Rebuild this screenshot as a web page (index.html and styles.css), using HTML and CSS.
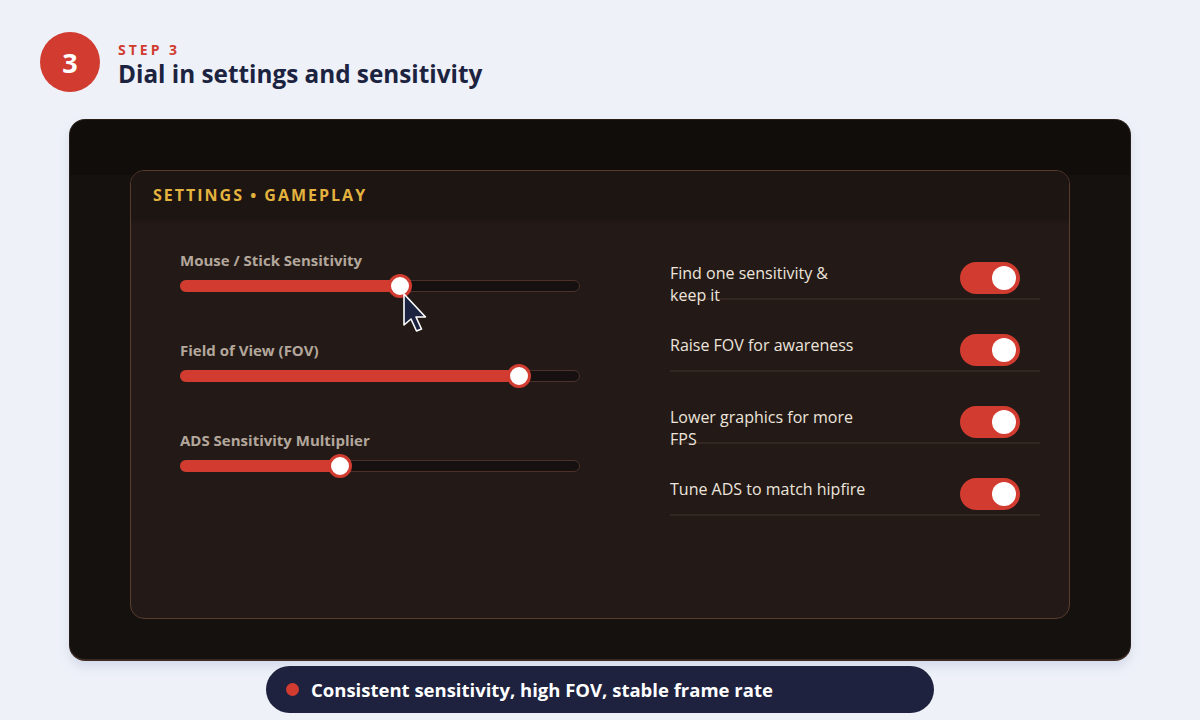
FILE: index.html
```html
<!DOCTYPE html>
<html lang="en">
<head>
    <meta charset="UTF-8">
    <meta name="viewport" content="width=device-width, initial-scale=1.0">
    <title>Step 3 - Dial in settings and sensitivity</title>
    <link rel="stylesheet" href="styles.css">
</head>
<body>
    <header class="step">
        <div class="step-num">3</div>
        <div class="step-text">
            <div class="step-label">STEP 3</div>
            <h1>Dial in settings and sensitivity</h1>
        </div>
    </header>

    <div class="screen">
        <div class="panel">
            <div class="panel-head">SETTINGS &bull; GAMEPLAY</div>
            <div class="panel-body">
                <div class="sliders">
                    <div class="slider">
                        <label>Mouse / Stick Sensitivity</label>
                        <div class="track">
                            <div class="fill" style="width: 55%">
                                <span class="thumb">
                                    <svg class="cursor" width="28" height="42" viewBox="0 0 28 42">
                                        <path d="M2 2 L2 33 L9 27 L14.5 39 L19.5 37 L14 25 L23.5 25 Z" fill="#1c2340" stroke="#fff" stroke-width="1.6" stroke-linejoin="round"/>
                                    </svg>
                                </span>
                            </div>
                        </div>
                    </div>
                    <div class="slider">
                        <label>Field of View (FOV)</label>
                        <div class="track">
                            <div class="fill" style="width: 85%"><span class="thumb"></span></div>
                        </div>
                    </div>
                    <div class="slider">
                        <label>ADS Sensitivity Multiplier</label>
                        <div class="track">
                            <div class="fill" style="width: 40%"><span class="thumb"></span></div>
                        </div>
                    </div>
                </div>

                <div class="toggles">
                    <div class="toggle-row">
                        <span>Find one sensitivity &amp; keep it</span>
                        <div class="switch on"><span></span></div>
                    </div>
                    <div class="toggle-row">
                        <span>Raise FOV for awareness</span>
                        <div class="switch on"><span></span></div>
                    </div>
                    <div class="toggle-row">
                        <span>Lower graphics for more FPS</span>
                        <div class="switch on"><span></span></div>
                    </div>
                    <div class="toggle-row">
                        <span>Tune ADS to match hipfire</span>
                        <div class="switch on"><span></span></div>
                    </div>
                </div>
            </div>
        </div>
    </div>

    <div class="summary">
        <span class="dot"></span>
        Consistent sensitivity, high FOV, stable frame rate
    </div>
</body>
</html>
```

FILE: styles.css
```css
body {
    margin: 0;
    background: #eef1f8;
    font-family: "Open Sans", "Noto Sans", sans-serif;
    color: #1c2340;
}
.step {
    display: flex;
    align-items: center;
    gap: 18px;
    padding: 32px 40px 0;
}
.step-num {
    width: 60px;
    height: 60px;
    border-radius: 50%;
    background: #d13b30;
    color: #fff;
    font-size: 27px;
    font-weight: 700;
    display: flex;
    align-items: center;
    justify-content: center;
}
.step-text {
    padding-top: 6px;
}
.step-label {
    color: #d13b30;
    font-size: 14px;
    font-weight: 700;
    letter-spacing: 3px;
    line-height: 18px;
}
.step h1 {
    margin: 0;
    font-size: 24.3px;
    line-height: 30px;
    font-weight: 700;
    color: #1c2340;
}
.screen {
    width: 1062px;
    height: 542px;
    box-sizing: border-box;
    margin: 27px auto 0;
    padding: 50px 60px 40px;
    border-radius: 16px;
    border: 1px solid #2a1e19;
    border-bottom: 2px solid #3d2a23;
    background: linear-gradient(#100d0b 0, #100d0b 55px, #15110f 55px);
    box-shadow: 0 6px 10px rgba(170, 180, 210, 0.35);
}
.panel {
    height: 100%;
    box-sizing: border-box;
    border: 1px solid #5a3b2f;
    border-radius: 14px;
    background: #231a17;
    overflow: hidden;
}
.panel-head {
    height: 47px;
    display: flex;
    align-items: center;
    padding-left: 22px;
    background: #1d1512;
    color: #e4b33f;
    font-size: 16px;
    font-weight: 700;
    letter-spacing: 2px;
    box-shadow: 0 2px 4px rgba(0, 0, 0, 0.2);
}
.panel-body {
    display: flex;
    gap: 90px;
    padding: 32px 0 0 49px;
}
.sliders {
    width: 400px;
}
.slider {
    margin-bottom: 48px;
}
.slider label {
    display: block;
    color: #b3a79c;
    font-size: 15px;
    font-weight: 700;
    line-height: 20px;
    margin-bottom: 10px;
}
.track {
    height: 12px;
    box-sizing: border-box;
    border: 1px solid #4b3129;
    border-radius: 6px;
    background: #171010;
    position: relative;
}
.fill {
    position: absolute;
    left: -1px;
    top: -1px;
    height: 12px;
    border-radius: 6px;
    background: #d13b30;
}
.thumb {
    position: absolute;
    right: -13px;
    top: -6px;
    width: 24px;
    height: 24px;
    box-sizing: border-box;
    border: 3px solid #d13b30;
    border-radius: 50%;
    background: #fff;
}
.cursor {
    position: absolute;
    left: 11px;
    top: 15px;
}
.toggles {
    width: 370px;
    padding-top: 12px;
}
.toggle-row {
    height: 36px;
    display: flex;
    justify-content: space-between;
    align-items: flex-start;
    border-bottom: 2px solid #33251f;
    margin-bottom: 34px;
}
.toggle-row span {
    width: 196px;
    color: #ede4dc;
    font-size: 16px;
    line-height: 22px;
}
.switch {
    width: 60px;
    height: 32px;
    margin-right: 20px;
    border-radius: 16px;
    background: #d13b30;
    position: relative;
}
.switch span {
    position: absolute;
    right: 4px;
    top: 4px;
    width: 24px !important;
    height: 24px;
    border-radius: 50%;
    background: #fff;
}
.summary {
    width: 668px;
    height: 47px;
    box-sizing: border-box;
    margin: 5px 0 0 266px;
    padding-left: 20px;
    border-radius: 24px;
    background: #1e223f;
    color: #fff;
    font-size: 18.5px;
    font-weight: 700;
    display: flex;
    align-items: center;
    gap: 12px;
}
.dot {
    width: 13px;
    height: 13px;
    border-radius: 50%;
    background: #d13b30;
}
```
